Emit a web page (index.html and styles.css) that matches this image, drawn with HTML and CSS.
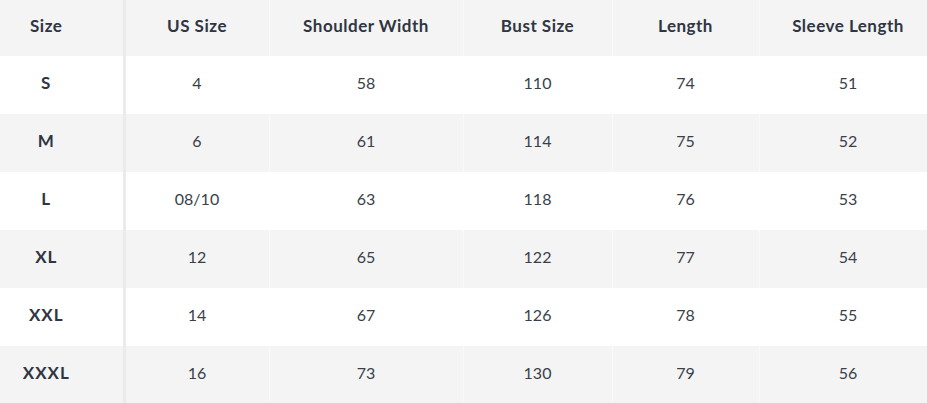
FILE: index.html
```html
<!DOCTYPE html>
<html>
<head>
<meta charset="utf-8">
<link rel="stylesheet" href="styles.css">
</head>
<body>
<table class="size-table">
  <colgroup>
    <col class="c-size">
    <col class="c-us">
    <col class="c-shoulder">
    <col class="c-bust">
    <col class="c-length">
    <col class="c-sleeve">
  </colgroup>
  <thead>
    <tr class="head">
      <th class="first">Size</th>
      <th>US Size</th>
      <th>Shoulder Width</th>
      <th>Bust Size</th>
      <th>Length</th>
      <th>Sleeve Length</th>
    </tr>
  </thead>
  <tbody>
    <tr><th class="first">S</th><td>4</td><td>58</td><td>110</td><td>74</td><td>51</td></tr>
    <tr class="alt"><th class="first">M</th><td>6</td><td>61</td><td>114</td><td>75</td><td>52</td></tr>
    <tr><th class="first">L</th><td>08/10</td><td>63</td><td>118</td><td>76</td><td>53</td></tr>
    <tr class="alt"><th class="first">XL</th><td>12</td><td>65</td><td>122</td><td>77</td><td>54</td></tr>
    <tr><th class="first">XXL</th><td>14</td><td>67</td><td>126</td><td>78</td><td>55</td></tr>
    <tr class="alt"><th class="first">XXXL</th><td>16</td><td>73</td><td>130</td><td>79</td><td>56</td></tr>
  </tbody>
</table>
</body>
</html>
```

FILE: styles.css
```css
html, body {
  margin: 0;
  padding: 0;
  background: #ffffff;
  overflow: hidden;
}

.size-table {
  width: 937px;
  table-layout: fixed;
  border-collapse: collapse;
  font-family: Lato, "Open Sans", sans-serif;
  color: #2f3542;
}

.c-size { width: 124px; }
.c-us { width: 145px; }
.c-shoulder { width: 194px; }
.c-bust { width: 149px; }
.c-length { width: 147px; }
.c-sleeve { width: 178px; }

.size-table th,
.size-table td {
  padding: 0;
  text-align: center;
  vertical-align: middle;
  border-right: 1px solid rgba(255, 255, 255, 0.45);
}

.size-table tbody tr {
  height: 58px;
}

.size-table .head {
  height: 56px;
  background: #f4f4f4;
}

.size-table .head th {
  font-size: 17px;
  font-weight: 700;
  letter-spacing: 0.5px;
  padding-bottom: 6px;
}

.size-table tbody td {
  font-size: 16px;
  font-weight: 400;
  color: #3a3f4a;
  padding-bottom: 5px;
}

.size-table tbody th {
  font-size: 17px;
  font-weight: 700;
  letter-spacing: 1px;
  padding-bottom: 5px;
}

.size-table .first {
  padding-right: 30px;
  border-right: 3px solid #ebebeb;
}

.size-table .alt {
  background: #f4f4f4;
}
```
